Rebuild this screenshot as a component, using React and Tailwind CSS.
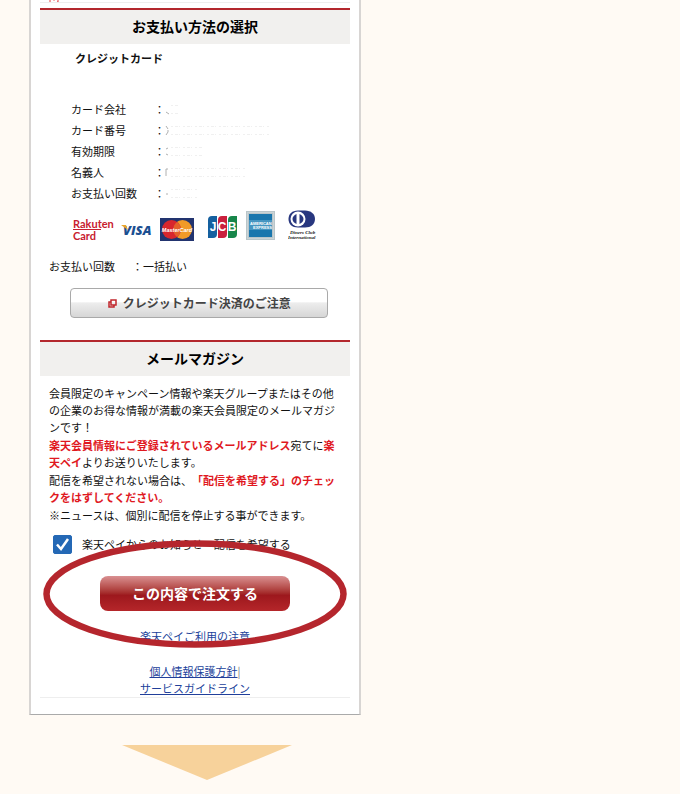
import React, { useState } from 'react';

const cardRows = [
  { label: 'カード会社', mark: 'M1 8 l3 2', width: 14 },
  { label: 'カード番号', mark: 'M1 1 l2 3 M3 5 v2 l-2 3', width: 104 },
  { label: '有効期限', mark: 'M1 3 l2 -1 M1 8 l2 1', width: 38 },
  { label: '名義人', mark: 'M1 9 V2 h2', width: 80 },
  { label: 'お支払い回数', mark: 'M1 6 h2', width: 34 },
];

const SectionTitle = ({ children }) => (
  <h2 className="h-9 border-t-2 border-[#b3272d] bg-[#f1f0ee] text-center text-sm leading-8 font-bold text-black">
    {children}
  </h2>
);

/* Erased value: only traces of the characters remain */
const ErasedValue = ({ mark, width }) => (
  <svg width="110" height="12" viewBox="0 0 110 12" fill="none" aria-hidden="true">
    <path d={mark} stroke="#b0b0b0" />
    <path d={`M6 1.5 H${width} M6 9.5 H${width}`} stroke="#f0f0f0" strokeDasharray="2 2 3 1 1 3" />
  </svg>
);

const RakutenLogo = () => (
  <div className="w-10 text-[11px] leading-[11px] font-bold text-[#c8202f] [font-family:Lato,sans-serif]">
    Rakuten
    <div className="h-px w-7 bg-[#c8202f]" />
    Card
  </div>
);

const VisaLogo = () => (
  <svg width="32" height="16" viewBox="0 0 32 16" role="img" aria-label="VISA">
    <text x="2" y="14" fontFamily="Open Sans, sans-serif" fontSize="13" fontWeight="800" fontStyle="italic" fill="#1b4f91">
      VISA
    </text>
    <path d="M0 4 h5 l2 5 z" fill="#e9a52b" />
  </svg>
);

const MasterCardLogo = () => (
  <svg width="34" height="23" viewBox="0 0 34 23" role="img" aria-label="MasterCard">
    <rect width="34" height="23" fill="#22346f" />
    <circle cx="22.5" cy="11.5" r="9.5" fill="#f19a27" />
    <circle cx="11.5" cy="11.5" r="9.5" fill="#d8262d" />
    <path d="M17 4 a9.5 9.5 0 0 1 0 15 a9.5 9.5 0 0 1 0 -15" fill="#e4602a" />
    <text x="17" y="13.5" textAnchor="middle" fontFamily="Liberation Sans, sans-serif" fontSize="5.5" fontWeight="700" fontStyle="italic" fill="#fff">
      MasterCard
    </text>
  </svg>
);

const JcbLogo = () => (
  <svg width="29" height="23" viewBox="0 0 29 23" role="img" aria-label="JCB">
    <path d="M4 0 H9 V18 a4 4 0 0 1 -4 4 H0 V4 a4 4 0 0 1 4 -4" fill="#15609f" />
    <path d="M14 0 H19 V18 a4 4 0 0 1 -4 4 H10 V4 a4 4 0 0 1 4 -4" fill="#c9203d" />
    <path d="M24 0 H29 V18 a4 4 0 0 1 -4 4 H20 V4 a4 4 0 0 1 4 -4" fill="#17864a" />
    <g fontFamily="Liberation Sans, sans-serif" fontSize="12" fontWeight="700" fill="#fff" textAnchor="middle">
      <text x="5" y="15">J</text>
      <text x="14" y="15">C</text>
      <text x="24" y="15">B</text>
    </g>
  </svg>
);

const AmexLogo = () => (
  <svg width="29" height="29" viewBox="0 0 29 29" role="img" aria-label="American Express">
    <rect width="29" height="29" fill="#b9c5c9" />
    <rect x="1.5" y="1.5" width="26" height="26" fill="none" stroke="#dbe2e4" strokeDasharray="1 1" />
    <rect x="3" y="3" width="23" height="23" fill="#1976ad" />
    <rect x="3" y="9" width="23" height="10" fill="#4595c1" />
    <g fontFamily="Liberation Sans, sans-serif" fontSize="4" fontWeight="700" fill="#fff">
      <text x="4" y="13.5">AMERICAN</text>
      <text x="7" y="17.5">EXPRESS</text>
    </g>
  </svg>
);

const DinersLogo = () => (
  <svg width="30" height="31" viewBox="0 0 30 31" role="img" aria-label="Diners Club International">
    <path d="M10 0.5 H17 C23 0.5 27 4 27 9 C27 14 23 17.5 17 17.5 H10 C4 17.5 0.5 14 0.5 9 C0.5 4 4 0.5 10 0.5" fill="#28377f" />
    <circle cx="10" cy="9" r="7.5" fill="#fff" />
    <path d="M8.5 4 V14 C6 13 4.5 11 4.5 9 C4.5 7 6 5 8.5 4 M11.5 4 C14 5 15.5 7 15.5 9 C15.5 11 14 13 11.5 14 Z" fill="#28377f" />
    <g fontFamily="Liberation Serif, serif" fontSize="5" fontWeight="700" fontStyle="italic" fill="#222">
      <text x="2" y="24">Diners Club</text>
      <text x="0" y="29">International</text>
    </g>
  </svg>
);

export default function App() {
  const [subscribe, setSubscribe] = useState(true);

  return (
    <div className="min-h-screen bg-[#fffaf4] pl-[29px] text-[11px] text-[#111] [font-family:'Noto_Sans_CJK_JP',sans-serif] [text-spacing-trim:space-all]">
      <main className="w-full max-w-[332px] border-x-2 border-b border-x-[#d8d5d3] border-b-[#aaa] bg-white px-[9px] pb-4">
        {/* End of the previous section */}
        <div className="h-[3px] border-b border-[#eee] pl-2">
          <svg className="block" width="14" height="2" viewBox="0 0 14 2" fill="none" stroke="#e63a40" aria-hidden="true">
            <path d="M2 0 V2 M10 0 V2 H9" />
            <path d="M5 0.5 H7" stroke="#f6b5b7" />
          </svg>
        </div>

        {/* Payment method */}
        <section className="pt-[5px]">
          <SectionTitle>お支払い方法の選択</SectionTitle>
          <h3 className="pt-1.5 pl-[35px] leading-4 font-bold">クレジットカード</h3>

          <dl className="pt-[33px] pl-[31px] leading-[21px]">
            {cardRows.map((row) => (
              <div key={row.label} className="flex items-center">
                <dt className="w-[83px]">{row.label}</dt>
                <dd className="flex items-center">
                  ：<ErasedValue mark={row.mark} width={row.width} />
                </dd>
              </div>
            ))}
          </dl>

          <div className="flex h-[50px] items-center pl-[33px]">
            <RakutenLogo />
            <div className="pl-2"><VisaLogo /></div>
            <div className="pl-[7px]"><MasterCardLogo /></div>
            <div className="pb-1 pl-3.5"><JcbLogo /></div>
            <div className="pb-2 pl-[9px]"><AmexLogo /></div>
            <div className="pb-2 pl-[13px]"><DinersLogo /></div>
          </div>

          <dl className="flex pt-0.5 pl-[9px] leading-[21px]">
            <dt className="w-[83px]">お支払い回数</dt>
            <dd>：一括払い</dd>
          </dl>

          <button
            type="button"
            className="mt-[11px] ml-[30px] flex h-[30px] w-5/6 items-center justify-center gap-1.5 rounded-[4px] border border-[#a9a9a9] bg-linear-to-b from-white from-45% via-[#ededed] via-50% to-[#d6d6d6] text-xs font-bold text-[#444]"
          >
            <svg width="9" height="9" viewBox="0 0 9 9" fill="none" stroke="#c1272d" strokeWidth="1.5" aria-hidden="true">
              <path d="M3 1 H8 V6 H3 Z M3 3 H1 V8 H6 V6" />
            </svg>
            クレジットカード決済のご注意
          </button>
        </section>

        {/* Mail magazine */}
        <section className="pt-[22px]">
          <SectionTitle>メールマガジン</SectionTitle>
          <div className="flex flex-col gap-px pt-[9px] pr-3.5 pl-[9px] leading-[17px]">
            <p>会員限定のキャンペーン情報や楽天グループまたはその他の企業のお得な情報が満載の楽天会員限定のメールマガジンです！</p>
            <p>
              <strong className="text-[#e0191f]">楽天会員情報にご登録されているメールアドレス</strong>宛てに<strong className="text-[#e0191f]">楽天ペイ</strong>よりお送りいたします。
            </p>
            <p>
              配信を希望されない場合は、<strong className="text-[#e0191f]">「配信を希望する」のチェックをはずしてください。</strong>
            </p>
            <p>※ニュースは、個別に配信を停止する事ができます。</p>
          </div>
        </section>

        {/* Order */}
        <section className="relative pt-2.5">
          <label className="flex h-5 items-center gap-2.5 pl-[13px]">
            <span className="relative flex size-[19px]">
              <input
                type="checkbox"
                checked={subscribe}
                onChange={(e) => setSubscribe(e.target.checked)}
                className="peer size-[19px] appearance-none rounded-[2px] border border-[#2468b5] checked:bg-[#2468b5]"
              />
              <svg className="pointer-events-none absolute inset-0 hidden peer-checked:block" viewBox="0 0 19 19" fill="none" stroke="#fff" strokeWidth="2.5" aria-hidden="true">
                <path d="M4 9.5 L8 14 L15 4" />
              </svg>
            </span>
            楽天ペイからのお知らせ・配信を希望する
          </label>
          <button
            type="button"
            className="mx-auto mt-[22px] block h-[35px] w-[190px] rounded-lg bg-linear-to-b from-[#d99092] via-[#9d181d] via-55% to-[#b5262a] pb-0.5 text-sm font-bold text-white"
          >
            この内容で注文する
          </button>
          <p className="pt-[17px] text-center leading-[17px]">
            <a href="#notice" className="text-[#213f9a] underline">楽天ペイご利用の注意</a>
          </p>
          {/* Ring around the order button */}
          <svg className="pointer-events-none absolute inset-x-0 top-4 w-full" viewBox="0 0 310 108" fill="none" aria-hidden="true">
            <ellipse cx="155" cy="54" rx="148.5" ry="50.5" stroke="#b5262d" strokeWidth="6.5" />
          </svg>
        </section>

        <footer className="border-b border-[#eee] pt-[18px] text-center leading-[17px] text-[#777]">
          <a href="#privacy" className="text-[#213f9a] underline">個人情報保護方針</a>|<br />
          <a href="#guideline" className="text-[#213f9a] underline">サービスガイドライン</a>
        </footer>
      </main>

      <div className="max-w-[332px] pt-[30px] pl-[93px]">
        <svg width="170" height="35" viewBox="0 0 170 35" aria-hidden="true">
          <path d="M0 0 H170 L85 35 Z" fill="#f7d29b" />
        </svg>
      </div>
    </div>
  );
}
